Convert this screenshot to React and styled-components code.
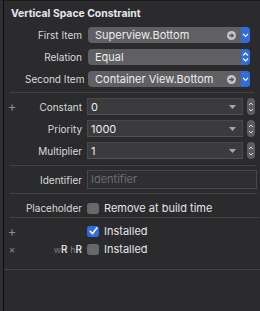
import React from "react";
import styled, { createGlobalStyle } from "styled-components";

const Global = createGlobalStyle`
  html, body {
    margin: 0;
    padding: 0;
    background: #2b2b2e;
  }
  body {
    font-family: Inter, "Liberation Sans", sans-serif;
    -webkit-font-smoothing: antialiased;
  }
`;

const Panel = styled.div`
  width: 260px;
  height: 311px;
  box-sizing: border-box;
  background: #2b2b2e;
  border-left: 3px solid #2f2f31;
  border-top: 1px solid #1c1c1e;
  position: relative;
  overflow: hidden;
  &::before {
    content: "";
    position: absolute;
    left: 0;
    top: 0;
    bottom: 0;
    width: 1px;
    background: #0c0c0d;
  }
`;

const Title = styled.div`
  padding: 6px 0 0 8px;
  height: 21px;
  box-sizing: border-box;
  font-size: 10.4px;
  font-weight: 700;
  color: #e6e6e8;
`;

const Section = styled.div`
  display: flex;
  flex-direction: column;
  gap: ${(p) => p.$gap || 6}px;
  padding: ${(p) => p.$pad || "0"};
`;

const Row = styled.div`
  display: grid;
  grid-template-columns: 16px 57px minmax(0, 1fr);
  column-gap: 5px;
  align-items: center;
  height: ${(p) => p.$h || 16}px;
  padding-left: 1px;
  padding-right: ${(p) => p.$right ?? 6}px;
`;

const Mark = styled.span`
  color: #8d8d90;
  font-size: ${(p) => (p.$small ? 10 : 13)}px;
  text-align: center;
  line-height: 1;
`;

const Label = styled.span`
  color: #d9d9db;
  font-size: 10px;
  text-align: right;
  white-space: nowrap;
`;

const Size = styled.span`
  color: #7d7d80;
  font-size: 9px;
  b {
    color: #dcdcde;
    font-weight: 600;
    font-size: 10px;
  }
`;

const Popup = styled.div`
  display: flex;
  height: 16px;
  margin-left: 1px;
  margin-right: 4px;
  border-radius: 4px;
  overflow: hidden;
  background: #606063;
`;

const PopupText = styled.span`
  flex: 1;
  padding-left: 7px;
  color: #ececee;
  font-size: 11px;
  line-height: 16px;
  white-space: nowrap;
`;

const GoIcon = styled.span`
  display: flex;
  align-items: center;
  padding-right: 5px;
`;

const BlueTab = styled.span`
  width: 9px;
  background: #2f6ddf;
  display: flex;
  align-items: center;
  justify-content: center;
`;

const ComboWrap = styled.div`
  display: flex;
  align-items: center;
  gap: 4px;
`;

const Combo = styled.div`
  flex: 1;
  height: 17px;
  box-sizing: border-box;
  display: flex;
  align-items: center;
  background: #3b3b3e;
  border: 1px solid #48484b;
  border-bottom-color: #525255;
  padding: 0 6px 0 3px;
  color: #ececee;
  font-size: 11px;
`;

const ComboValue = styled.span`
  flex: 1;
`;

const Stepper = styled.div`
  width: 8px;
  height: 17px;
  border-radius: 4px;
  background: #5d5d60;
  display: flex;
  align-items: center;
  justify-content: center;
`;

const Field = styled.div`
  height: 19px;
  box-sizing: border-box;
  border: 1px solid #48484b;
  background: #2f2f32;
  color: #6c6c6f;
  font-size: 11px;
  line-height: 17px;
  padding-left: 3px;
`;

const CheckLine = styled.div`
  display: flex;
  align-items: center;
  gap: 5px;
  color: #e4e4e6;
  font-size: 11px;
  white-space: nowrap;
`;

const Box = styled.span`
  width: 12px;
  height: 11px;
  flex: none;
  border-radius: 3px;
  background: ${(p) => (p.$on ? "#2f6ddf" : "#68686b")};
  display: flex;
  align-items: center;
  justify-content: center;
`;

const Sep = styled.div`
  height: 1px;
  background: #434346;
  margin: ${(p) => p.$m};
`;

const Chevron = ({ both }) => (
  <svg width="7" height={both ? 10 : 6} viewBox={both ? "0 0 7 10" : "0 0 7 6"}>
    {both ? (
      <path d="M1 3.5 L3.5 1 L6 3.5 M1 6.5 L3.5 9 L6 6.5" stroke="#fff" strokeWidth="1.2" fill="none" />
    ) : (
      <path d="M1 1.8 L3.5 4.3 L6 1.8" stroke="#fff" strokeWidth="1.2" fill="none" />
    )}
  </svg>
);

const Go = () => (
  <svg width="9" height="9" viewBox="0 0 9 9">
    <circle cx="4.5" cy="4.5" r="4.5" fill="#c4c4c6" />
    <path d="M2 4.5 H6.3 M4.4 2.6 L6.3 4.5 L4.4 6.4" stroke="#555558" strokeWidth="1.3" fill="none" />
  </svg>
);

const Caret = () => (
  <svg width="7" height="4" viewBox="0 0 7 4">
    <path d="M0 0 H7 L3.5 4 Z" fill="#a8a8ab" />
  </svg>
);

const StepIcon = () => (
  <svg width="6" height="12" viewBox="0 0 6 12">
    <path d="M1 4 L3 2 L5 4 M1 8 L3 10 L5 8" stroke="#dcdcde" strokeWidth="1" fill="none" />
  </svg>
);

const Tick = () => (
  <svg width="9" height="8" viewBox="0 0 9 8">
    <path d="M1.2 4.2 L3.6 6.6 L7.8 1" stroke="#fff" strokeWidth="1.6" fill="none" strokeLinecap="round" strokeLinejoin="round" />
  </svg>
);

const PopupRow = ({ label, value, both, go = true }) => (
  <Row>
    <span />
    <Label>{label}</Label>
    <Popup>
      <PopupText>{value}</PopupText>
      {go && (
        <GoIcon>
          <Go />
        </GoIcon>
      )}
      <BlueTab>
        <Chevron both={both} />
      </BlueTab>
    </Popup>
  </Row>
);

const ComboRow = ({ mark, label, value }) => (
  <Row $h={17} $right={5}>
    <Mark>{mark}</Mark>
    <Label>{label}</Label>
    <ComboWrap>
      <Combo>
        <ComboValue>{value}</ComboValue>
        <Caret />
      </Combo>
      <Stepper>
        <StepIcon />
      </Stepper>
    </ComboWrap>
  </Row>
);

export default function App() {
  return (
    <>
      <Global />
      <Panel>
        <Title>Vertical Space Constraint</Title>
        <Section $pad="5px 0 0">
          <PopupRow label="First Item" value="Superview.Bottom" />
          <PopupRow label="Relation" value="Equal" both go={false} />
          <PopupRow label="Second Item" value="Container View.Bottom" />
        </Section>
        <Sep $m="5px 6px 5px 7px" />
        <Section $gap={5}>
          <ComboRow mark="+" label="Constant" value="0" />
          <ComboRow label="Priority" value="1000" />
          <ComboRow label="Multiplier" value="1" />
        </Section>
        <Sep $m="6px 5px 4px 7px" />
        <Row $h={19} $right={3}>
          <span />
          <Label>Identifier</Label>
          <Field>Identifier</Field>
        </Row>
        <Sep $m="4px 3px 7px 7px" />
        <Row $h={11}>
          <span />
          <Label>Placeholder</Label>
          <CheckLine>
            <Box />
            Remove at build time
          </CheckLine>
        </Row>
        <Sep $m="5px 1px 6px 7px" />
        <Section $gap={7}>
          <Row $h={11}>
            <Mark>+</Mark>
            <span />
            <CheckLine>
              <Box $on>
                <Tick />
              </Box>
              Installed
            </CheckLine>
          </Row>
          <Row $h={11}>
            <Mark $small>×</Mark>
            <Label>
              <Size>
                w<b>R</b> h<b>R</b>
              </Size>
            </Label>
            <CheckLine>
              <Box />
              Installed
            </CheckLine>
          </Row>
        </Section>
        <Sep $m="16px 0 0 0" />
      </Panel>
    </>
  );
}
